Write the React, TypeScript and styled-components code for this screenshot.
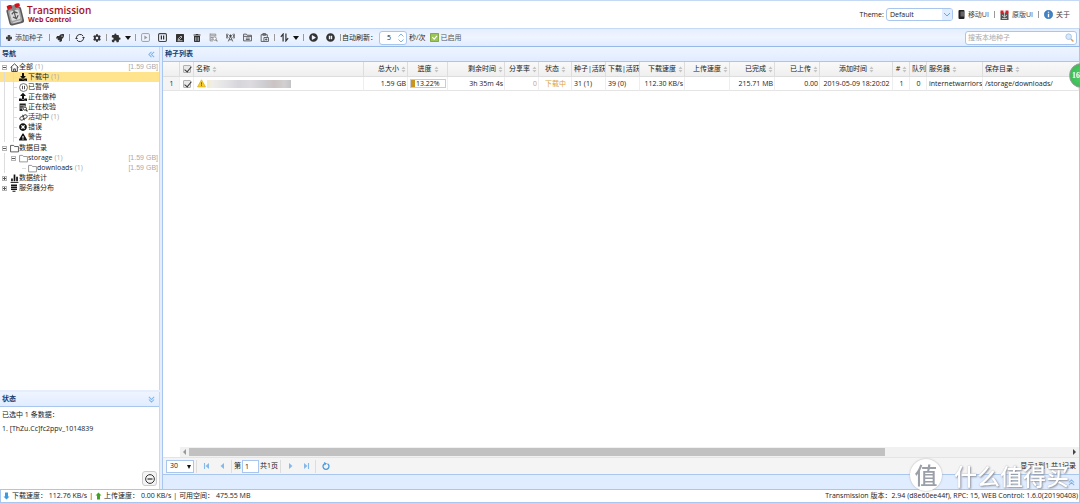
import React from 'react';
import styled, { createGlobalStyle, css } from 'styled-components';
import {
  FaRocket, FaCog, FaDownload, FaUpload, FaTimesCircle,
  FaExclamationTriangle, FaTrashAlt, FaPlayCircle, FaPauseCircle,
} from 'react-icons/fa';
import { MdExtension } from 'react-icons/md';

const line = '#95b8e7';
const ui = `"Open Sans", "Noto Sans CJK SC", sans-serif`;

const Global = createGlobalStyle`
  * { box-sizing: border-box; }
  body { margin: 0; overflow: hidden; background: #fff; }
  body, button, input, select { font-family: ${ui}; font-size: 7px; line-height: 10px; color: #222; }
  svg { display: block; flex: none; }
`;

const Page = styled.div`
  height: 100vh;
  display: flex;
  flex-direction: column;
  background: #e6eefb;
  overflow: hidden;
`;
const Header = styled.header`
  height: 28px;
  display: flex;
  align-items: center;
  justify-content: space-between;
  padding: 0 9px 0 4px;
  background: #fff;
  border: 1px solid #c5d9f5;
  border-bottom: 0;
`;
const Brand = styled.div`
  display: flex;
  align-items: center;
  gap: 2px;
  color: #a80f1c;
`;
const Title = styled.div`
  font-size: 10px;
  line-height: 11px;
  font-weight: 600;
`;
const Subtitle = styled.div`
  font-size: 7px;
  line-height: 8px;
  font-weight: 700;
  padding-left: 1px;
`;
const HeaderTools = styled.div`
  display: flex;
  align-items: center;
  gap: 5px;
`;
const ThemeLabel = styled.label`
  display: flex;
  align-items: center;
  gap: 2px;
`;
const SelectWrap = styled.span<{ $w: number }>`
  position: relative;
  display: block;
  width: ${p => p.$w}px;
  svg { position: absolute; right: 0; top: 0; pointer-events: none; }
`;
const Select = styled.select<{ $round?: boolean }>`
  appearance: none;
  display: block;
  width: 100%;
  height: 13px;
  padding: 0 3px;
  background: #fff;
  border: 1px solid #a9c6ee;
  border-radius: ${p => (p.$round ? 3 : 0)}px;
`;
const Link = styled.a`
  display: flex;
  align-items: center;
  gap: 3px;
  color: #444;
  text-decoration: none;
`;
const Divider = styled.span`
  width: 1px;
  height: 7px;
  background: #999;
`;
const Toolbar = styled.div`
  height: 19px;
  display: flex;
  align-items: center;
  padding: 0 2px 0 4px;
  border: 1px solid ${line};
  border-top-color: #c5d9f5;
  background: linear-gradient(#e5eefd, #eff5ff 50%, #e0ecff);
  ${Divider} { margin: 0 1px; }
`;
const plainButton = css`
  border: 0;
  padding: 0;
  background: none;
  display: flex;
  align-items: center;
  color: #333;
`;
const AddButton = styled.button`
  ${plainButton}
  gap: 2px;
  padding-right: 5px;
  color: #444;
`;
const ToolButton = styled.button<{ $menu?: boolean }>`
  ${plainButton}
  width: ${p => (p.$menu ? 26 : 17)}px;
  height: 15px;
  justify-content: center;
  gap: 4px;
`;
const Spinner = styled.span`
  display: flex;
  align-items: center;
  width: 28px;
  height: 14px;
  margin: 0 2px;
  padding-right: 2px;
  background: #fff;
  border: 1px solid #a9c6ee;
  border-radius: 3px;
`;
const SpinInput = styled.input`
  flex: 1;
  min-width: 0;
  border: 0;
  padding: 0;
  background: none;
  text-align: center;
  outline: 0;
`;
const Enabled = styled.button`
  ${plainButton}
  gap: 2px;
  margin-left: 4px;
  color: #555;
`;
const Search = styled.label`
  display: flex;
  align-items: center;
  width: 112px;
  height: 14px;
  margin-left: auto;
  padding: 0 2px;
  background: #fff;
  border: 1px solid #a9c6ee;
  border-radius: 3px;
`;
const SearchInput = styled.input`
  flex: 1;
  min-width: 0;
  border: 0;
  padding: 0;
  outline: 0;
  &::placeholder { color: #aaa; }
`;
const Body = styled.div`
  flex: 1;
  min-height: 0;
  display: flex;
  gap: 2px;
`;
const Sidebar = styled.aside`
  width: 160px;
  display: flex;
  flex-direction: column;
  gap: 2px;
`;
const Panel = styled.section<{ $grow?: boolean }>`
  ${p => (p.$grow ? 'flex: 1; min-height: 0;' : 'height: 97px;')}
  min-width: 0;
  display: flex;
  flex-direction: column;
  background: #fff;
  border-right: 1px solid #c5d9f5;
`;
const PanelHead = styled.h2`
  flex: none;
  height: 15px;
  margin: 0;
  padding: 0 4px 0 2px;
  display: flex;
  align-items: center;
  justify-content: space-between;
  font-size: 7px;
  font-weight: 700;
  color: #1c3a6e;
  border-bottom: 1px solid #a9c6ee;
  background: linear-gradient(#eff5ff, #e0ecff);
`;
const Tree = styled.ul`
  list-style: none;
  margin: 0;
  padding: 0;
`;
const Group = styled.li`
  padding-bottom: 1px;
`;
const Node = styled.div<{ $on?: boolean }>`
  height: 10px;
  display: flex;
  align-items: center;
  padding-right: 1px;
  background: ${p => (p.$on ? '#ffe48d' : 'transparent')};
`;
const Guide = styled.span<{ $tick?: boolean; $bar?: boolean }>`
  align-self: stretch;
  width: 9px;
  background:
    linear-gradient(#ddd, #ddd) 4px 0 / 1px ${p => (p.$bar ? '100%' : '0')} no-repeat,
    linear-gradient(#ddd, #ddd) 4px 5px / ${p => (p.$tick ? '4px 1px' : '0 0')} no-repeat;
`;
const Toggle = styled.span`
  width: 9px;
  padding-left: 2px;
`;
const IconCell = styled.span`
  width: 10px;
  display: flex;
  justify-content: center;
  color: #111;
`;
const Count = styled.span`
  color: #aaa;
  padding-left: 2px;
`;
const Size = styled.span`
  margin-left: auto;
  color: #aaa;
  font-family: "Liberation Sans", sans-serif;
`;
const StatusBody = styled.div`
  flex: 1;
  padding: 3px 2px;
  display: flex;
  flex-direction: column;
  gap: 4px;
`;
const HideButton = styled.button`
  ${plainButton}
  justify-content: center;
  width: 15px;
  height: 15px;
  margin: auto 0 0 auto;
  border: 1px solid #ccc;
  border-radius: 3px;
  background: #f4f4f4;
`;
const Main = styled.main`
  flex: 1;
  min-width: 0;
  display: flex;
  flex-direction: column;
  background: #fff;
  border: 1px solid #a9c6ee;
  border-width: 0 1px;
`;
const GridArea = styled.div`
  flex: 1;
  min-height: 0;
  overflow: hidden;
`;
const Table = styled.table`
  width: 100%;
  table-layout: fixed;
  border-collapse: separate;
  border-spacing: 0;
`;
const cell = css<{ $a?: string }>`
  padding: 0 1px 0 2px;
  overflow: hidden;
  white-space: nowrap;
  text-align: ${p => p.$a || 'left'};
`;
const Th = styled.th<{ $a?: string }>`
  ${cell}
  height: 15px;
  font-weight: 400;
  border-right: 1px solid #ddd;
  border-bottom: 1px solid #ddd;
  background: linear-gradient(#f9f9f9, #efefef);
  &:last-child { border-right-color: transparent; }
`;
const Td = styled.td<{ $a?: string; $c?: string; $gutter?: boolean }>`
  ${cell}
  height: 14px;
  color: ${p => p.$c || '#222'};
  background: ${p => (p.$gutter ? '#f4f4f4' : '#fff')};
  border-right: 1px solid #eee;
  border-bottom: 1px solid #e4e4e4;
`;
const HeadCell = styled.span`
  display: inline-flex;
  align-items: center;
  gap: 2px;
  vertical-align: middle;
`;
const Check = styled.input`
  appearance: none;
  display: block;
  position: relative;
  width: 8px;
  height: 8px;
  margin: 0 auto;
  border: 1px solid #b0b0b0;
  border-radius: 1px;
  background: #e8e8e8;
  &:checked::after {
    content: '';
    position: absolute;
    left: 2px;
    top: -1px;
    width: 3px;
    height: 6px;
    border: solid #333;
    border-width: 0 1px 1px 0;
    transform: rotate(40deg);
  }
`;
const NameCell = styled.div`
  display: flex;
  align-items: center;
  gap: 1px;
  padding-left: 1px;
`;
const Mosaic = styled.span`
  width: 84px;
  height: 8px;
  background: linear-gradient(90deg, #f4ebc4, #efeeea 6%, #e4e4e7 22%, #d6d6da 38%, #dedbe0 52%, #cfcfd4 66%, #cbc3c3 80%, #d2d0d1 92%, #c3c3c7);
`;
const Bar = styled.div`
  display: flex;
  align-items: center;
  height: 9px;
  border: 1px solid #ccc;
  background: linear-gradient(90deg, #c8961e 13%, #fff 13%);
  padding-left: 5px;
`;
const ScrollRow = styled.div`
  height: 10px;
  margin-left: 17px;
  display: flex;
  align-items: center;
  justify-content: space-between;
  gap: 3px;
  padding: 0 2px;
  background: #f1f1f1;
`;
const Track = styled.div`
  flex: 1;
  height: 8px;
  background: linear-gradient(#c1c1c1, #c1c1c1) 0 0 / 79% 100% no-repeat;
`;
const Pager = styled.div`
  height: 17px;
  display: flex;
  align-items: center;
  padding: 0 3px;
  background: #f4f4f4;
  border-top: 1px solid #e4e4e4;
`;
const PagerButton = styled.button`
  ${plainButton}
  width: 15px;
  height: 12px;
  justify-content: center;
`;
const PagerSep = styled.span`
  width: 1px;
  height: 13px;
  margin: 0 2px;
  background: #ddd;
`;
const PageInput = styled.input`
  width: 17px;
  height: 13px;
  margin: 0 1px;
  padding: 0 2px;
  border: 1px solid #a9c6ee;
  background: #fff;
`;
const PagerInfo = styled.span`
  margin-left: auto;
`;
const DetailBar = styled.div`
  height: 15px;
  display: flex;
  align-items: center;
  justify-content: flex-end;
  padding: 0 4px;
  border-top: 1px solid #a9c6ee;
  background: #e0ecff;
`;
const Footer = styled.footer`
  height: 14px;
  display: flex;
  align-items: center;
  gap: 2px;
  padding: 0 1px 0 2px;
  background: #fff;
  border: 1px solid #a9c6ee;
`;
const Version = styled.span`
  margin-left: auto;
`;
const SpeedBadge = styled.div`
  position: fixed;
  right: -14px;
  top: 63px;
  width: 25px;
  height: 25px;
  padding-left: 2px;
  border-radius: 50%;
  border: 1px solid #9a9a9a;
  background: radial-gradient(circle, #4fd068, #35b750);
  color: #fff;
  font: 700 8px/23px "Liberation Serif", serif;
`;
const Watermark = styled.div`
  position: fixed;
  right: 11px;
  bottom: 12px;
  display: flex;
  align-items: center;
  gap: 12px;
  color: #fff;
  font: 500 23px/32px "Noto Sans CJK SC", sans-serif;
  text-shadow: 1px 1px 2px #8a8f99, 0 0 1px #a0a5ae;
`;
const Seal = styled.span`
  width: 32px;
  height: 32px;
  border-radius: 50%;
  background: #fff;
  box-shadow: 0 0 2px #aaa;
  color: #9b9fa8;
  text-align: center;
  line-height: 30px;
  text-shadow: none;
`;

const Svg = ({ w = 8, h = w, vb = '0 0 16 16', children }: {
  w?: number; h?: number; vb?: string; children: React.ReactNode;
}) => (
  <svg width={w} height={h} viewBox={vb} fill="none" stroke="currentColor" strokeWidth="1.6" aria-hidden="true">
    {children}
  </svg>
);

const Logo = () => (
  <Svg w={20} h={24} vb="0 0 40 48">
    <g transform="rotate(-14 20 24)" stroke="none">
      <rect x="5" y="9" width="30" height="34" rx="5" fill="#5a5a5a" />
      <rect x="8" y="11" width="24" height="29" rx="4" fill="#a2a2a2" />
      <rect x="11" y="15" width="18" height="19" rx="2" fill="#dcdcdc" />
      <path d="M20 14v17M14 21l6-4 6 4M15 27l6 5 5-6" stroke="#555" strokeWidth="2.4" fill="none" />
      <path d="M13 38h15" stroke="#ddd" strokeWidth="2" />
      <path d="M17 4h8v10h-8z" fill="#888" />
      <path d="M8 3c4-2 8-1 10 0v6c-3 1-7 1-10-1zM24 3c4-1 8-1 10 1v5c-3 1-7 1-10 0z" fill="#d5101c" />
    </g>
  </Svg>
);
const Caret = () => <Svg w={6} h={4} vb="0 0 6 4"><path d="M0 0h6L3 4z" fill="#111" stroke="none" /></Svg>;
const Sort = () => (
  <Svg w={5} h={7} vb="0 0 10 14"><path d="M1 6l4-5 4 5zM1 8h8l-4 5z" fill="#c4c4c4" stroke="none" /></Svg>
);
const Plus = () => <Svg w={8}><path d="M8 2v12M2 8h12" strokeWidth="5" /></Svg>;
const Refresh = () => (
  <Svg w={10}><path d="M2.200 7.500a6 6 0 0 1 11-2.500M13.800 8.500a6 6 0 0 1-11 2.500" /><path d="M15.800 6.500h-4.600l2.600 3zM.2 9.500h4.600l-2.600-3z" fill="currentColor" stroke="none" /></Svg>
);
const BoxPlay = () => <Svg w={9}><rect x="1" y="1" width="14" height="14" rx="2" stroke="#999" /><path d="M6 4.500v7L11.500 8z" fill="#999" stroke="none" /></Svg>;
const BoxPause = () => <Svg w={9}><rect x="1" y="1" width="14" height="14" rx="2" stroke="#444" strokeWidth="2" /><path d="M6 4.500v7M10 4.500v7" strokeWidth="2.200" /></Svg>;
const Edit = () => <Svg w={8}><rect width="16" height="16" rx="1" fill="#333" stroke="none" /><path d="M4.500 9.500L10 4l2 2-5.500 5.500h-2zM3 13.500h10" stroke="#fff" strokeWidth="1.300" /></Svg>;
const ListSearch = () => (
  <Svg w={9}><g stroke="#888"><path d="M2 2h10v4M2 1v13h5M3 5h8M3 8h4M3 11h4" /><circle cx="10" cy="10" r="3" fill="#fff" /><path d="M12 12l3 3" strokeWidth="2" /></g></Svg>
);
const Verify = () => (
  <Svg w={9}><path d="M1 1h11v5a5 5 0 0 0-5 8H1z" fill="#222" stroke="none" /><path d="M2 5h9M2 9h5" stroke="#fff" strokeWidth="1.200" /><circle cx="10.500" cy="10" r="2.800" stroke="#222" /><path d="M12.500 12l2.500 3" stroke="#222" strokeWidth="2" /></Svg>
);
const Tower = () => (
  <Svg w={9}><path d="M8 6L4 15M8 6l4 9M5.500 12h5M4 2a5 5 0 0 0 0 7M12 2a5 5 0 0 1 0 7M2 1a7 7 0 0 0 0 9M14 1a7 7 0 0 1 0 9" stroke="#555" /><circle cx="8" cy="5" r="1.500" fill="#555" /></Svg>
);
const FolderLines = () => <Svg w={9}><path d="M1 14V2h5l1.500 2H15v10zM1 6h14M5 9h7M5 11.500h7" stroke="#555" /></Svg>;
const Paste = () => <Svg w={9}><path d="M7 15H2V3h11v4M5 3V1h5v3H5z" stroke="#555" /><path d="M7 8h8v7H7zM9 11.500h4M11 9.500v4" stroke="#555" /></Svg>;
const SortBars = () => <Svg w={9}><path d="M5.500 15V2L1.500 7M10.500 1v13l4-5" strokeWidth="2.200" /></Svg>;
const Home = () => <Svg w={9}><path d="M1 8l7-6.500L15 8M3 7v8h10V7M6.500 15v-4.500h3V15" stroke="#333" /></Svg>;
const PauseRing = () => <Svg w={9}><circle cx="8" cy="8" r="7" stroke="#444" strokeWidth="1.300" /><path d="M6.200 5v6M9.800 5v6" stroke="#444" /></Svg>;
const Active = () => (
  <Svg w={9}><g transform="rotate(-20 8 8)"><path d="M7 11.500H4a3 3 0 0 1 0-6h5M7 3l2.500 2.500L7 8M9 4.500h3a3 3 0 0 1 0 6H7M9 13l-2.500-2.500L9 8" stroke="#333" strokeWidth="1.400" /></g></Svg>
);
const Folder = ({ light }: { light?: boolean }) => <Svg w={9}><path d="M1 14V2.500h5.500L8 4.500h7V14z" stroke={light ? '#888' : '#444'} strokeWidth="1.500" /></Svg>;
const Chart = () => <Svg w={9}><path d="M3.500 13V8M8 13V1M12.500 13V5" strokeWidth="3" /><path d="M1 15h14" /></Svg>;
const Servers = () => <Svg w={8}><path d="M2 2.500h12M2 6.500h12M2 10.500h12" strokeWidth="3.200" /><path d="M5 14.500h6" strokeWidth="2" /></Svg>;
const Box = ({ open }: { open?: boolean }) => (
  <Svg w={5} vb="0 0 5 5"><rect x=".5" y=".5" width="4" height="4" stroke="#b5b5b5" strokeWidth="1" /><path d={open ? 'M1 2.500h3' : 'M1 2.500h3M2.500 1v3'} stroke="#555" strokeWidth="1" /></Svg>
);
const Chevrons = ({ turn = 0 }: { turn?: number }) => (
  <Svg w={7}><g transform={`rotate(${turn} 8 8)`}><path d="M8 2L2 8l6 6M14 2L8 8l6 6" stroke="#7fb4ea" strokeWidth="2.400" /></g></Svg>
);
const PageArrow = ({ flip, end }: { flip?: boolean; end?: boolean }) => (
  <Svg w={8}><g transform={flip ? 'rotate(180 8 8)' : undefined}><path d="M12 2v12L5 8z" fill="#85b9ea" stroke="none" />{end && <path d="M3 2v12" stroke="#85b9ea" strokeWidth="2.200" />}</g></Svg>
);
const Arrow = ({ up }: { up?: boolean }) => (
  <Svg w={7} h={8} vb="0 0 14 16"><path d={up ? 'M7 1l6 6h-3v8H4V7H1z' : 'M7 15l6-6h-3V1H4v8H1z'} fill={up ? '#3fa51c' : '#3b9be0'} stroke="none" /></Svg>
);

type TreeItem = { icon: React.ReactNode; text: string; count?: number; on?: boolean };
const states: TreeItem[] = [
  { icon: <FaDownload size={8} />, text: '下载中', count: 1, on: true },
  { icon: <PauseRing />, text: '已暂停' },
  { icon: <FaUpload size={8} />, text: '正在做种' },
  { icon: <Verify />, text: '正在校验' },
  { icon: <Active />, text: '活动中', count: 1 },
  { icon: <FaTimesCircle size={8} />, text: '错误' },
  { icon: <FaExclamationTriangle size={8} />, text: '警告' },
];

type Column = { head: React.ReactNode; w?: number; a?: string; ha?: string; sort?: boolean; value: React.ReactNode; c?: string };
const columns: Column[] = [
  { head: '', w: 17, a: 'center', value: '1' },
  { head: <Check type="checkbox" defaultChecked aria-label="全选" />, w: 14, value: <Check type="checkbox" defaultChecked aria-label="选择" /> },
  {
    head: '名称', w: 170, sort: true,
    value: (
      <NameCell>
        <Svg w={9}><path d="M8 1.500L15 14H1z" fill="#f7cf2b" stroke="#e0b52a" /><path d="M8 6v4M8 11v1.500" stroke="#6a5400" /></Svg>
        <Mosaic />
      </NameCell>
    ),
  },
  { head: '总大小', w: 44, a: 'right', sort: true, value: '1.59 GB' },
  { head: '进度', w: 40, a: 'left', ha: 'center', sort: true, value: <Bar>13.22%</Bar> },
  { head: '剩余时间', w: 57, a: 'right', sort: true, value: '3h 35m 4s' },
  { head: '分享率', w: 34, a: 'right', sort: true, value: '0', c: '#d9a441' },
  { head: '状态', w: 33, a: 'center', sort: true, value: '下载中', c: '#d9a441' },
  { head: '种子|活跃', w: 34, value: '31 (1)' },
  { head: '下载|活跃', w: 34, value: '39 (0)' },
  { head: '下载速度', w: 45, a: 'right', sort: true, value: '112.30 KB/s' },
  { head: '上传速度', w: 45, a: 'right', sort: true, value: '' },
  { head: '已完成', w: 45, a: 'right', sort: true, value: '215.71 MB' },
  { head: '已上传', w: 45, a: 'right', sort: true, value: '0.00' },
  { head: '添加时间', w: 73, a: 'center', sort: true, value: '2019-05-09 18:20:02' },
  { head: '#', w: 17, a: 'center', sort: true, value: '1' },
  { head: '队列', w: 17, a: 'center', value: '0' },
  { head: '服务器', w: 56, sort: true, value: 'internetwarriors.' },
  { head: '保存目录', sort: true, value: '/storage/downloads/' },
];

export default function App() {
  return (
    <Page>
      <Global />
      <Header>
        <Brand>
          <Logo />
          <div>
            <Title>Transmission</Title>
            <Subtitle>Web Control</Subtitle>
          </div>
        </Brand>
        <HeaderTools>
          <ThemeLabel>
            Theme:
            <SelectWrap $w={67}>
              <Select $round defaultValue="Default"><option>Default</option></Select>
              <svg width="11" height="13" viewBox="0 0 11 13">
                <path d="M0 1h8a2 2 0 0 1 2 2v7a2 2 0 0 1-2 2H0z" fill="#e0ecff" />
                <path d="M2 5l3 3 3-3" fill="none" stroke="#6ea5e0" />
              </svg>
            </SelectWrap>
          </ThemeLabel>
          <Link href="#mobile">
            <Svg w={7} h={9} vb="0 0 14 18"><rect x="1" width="12" height="18" rx="2" fill="#222" stroke="none" /><path d="M5 3h7v10H5z" fill="#666" stroke="none" /></Svg>
            移动UI
          </Link>
          <Divider />
          <Link href="#classic">
            <Svg w={9} h={10} vb="0 0 18 20"><rect x="1" y="5" width="16" height="15" fill="#555" stroke="none" /><path d="M1 1h6v5H1zM11 1h6v5h-6z" fill="#d5202a" stroke="none" /><path d="M9 1v13M4 10l5 4 5-4M4 17h10" stroke="#ddd" /></Svg>
            原版UI
          </Link>
          <Divider />
          <Link href="#about">
            <Svg w={9}><circle cx="8" cy="8" r="7.500" fill="#3f83c9" stroke="#2f6cab" strokeWidth="1" /><path d="M8 3v2M8 6.500V13" stroke="#fff" strokeWidth="2.400" /></Svg>
            关于
          </Link>
        </HeaderTools>
      </Header>

      <Toolbar>
        <AddButton><Plus />添加种子</AddButton>
        <Divider />
        <ToolButton aria-label="添加"><FaRocket size={8} /></ToolButton>
        <Divider />
        <ToolButton aria-label="刷新"><Refresh /></ToolButton>
        <ToolButton aria-label="设置"><FaCog size={8} /></ToolButton>
        <Divider />
        <ToolButton $menu aria-label="插件"><MdExtension size={10} /><Caret /></ToolButton>
        <Divider />
        <ToolButton aria-label="开始"><BoxPlay /></ToolButton>
        <ToolButton aria-label="暂停"><BoxPause /></ToolButton>
        <ToolButton aria-label="改名"><Edit /></ToolButton>
        <ToolButton aria-label="删除"><FaTrashAlt size={8} /></ToolButton>
        <ToolButton aria-label="校验"><ListSearch /></ToolButton>
        <ToolButton aria-label="汇报"><Tower /></ToolButton>
        <ToolButton aria-label="目录"><FolderLines /></ToolButton>
        <ToolButton aria-label="复制"><Paste /></ToolButton>
        <Divider />
        <ToolButton $menu aria-label="队列"><SortBars /><Caret /></ToolButton>
        <Divider />
        <ToolButton aria-label="全部开始"><FaPlayCircle size={9} /></ToolButton>
        <ToolButton aria-label="全部暂停"><FaPauseCircle size={9} /></ToolButton>
        <Divider />
        <label htmlFor="interval">自动刷新：</label>
        <Spinner>
          <SpinInput id="interval" defaultValue="5" />
          <Svg w={6} h={10} vb="0 0 6 10"><path d="M.5 3.500L3 1l2.500 2.500M.5 6.500L3 9l2.500-2.500" stroke="#7fb4ea" strokeWidth="1" /></Svg>
        </Spinner>
        <span>秒/次</span>
        <Enabled>
          <Svg w={9}><rect x="1" y="1" width="14" height="14" fill="#9cc656" stroke="#7ba43a" /><path d="M4 7.500l3.500 3.500L12.500 5" stroke="#fff" strokeWidth="2" /></Svg>
          已启用
        </Enabled>
        <Search>
          <SearchInput placeholder="搜索本地种子" aria-label="搜索本地种子" />
          <Svg w={9}><circle cx="6.500" cy="6.500" r="5" fill="#d6e8fa" stroke="#a9c4e0" /><path d="M10.500 10.500L15 15" stroke="#d9a066" strokeWidth="2.600" /></Svg>
        </Search>
      </Toolbar>

      <Body>
        <Sidebar>
          <Panel $grow>
            <PanelHead>导航<Chevrons /></PanelHead>
            <Tree>
              <Group>
                <Node>
                  <Toggle><Box open /></Toggle><IconCell><Home /></IconCell>全部<Count>(1)</Count><Size>[1.59 GB]</Size>
                </Node>
                <Tree>
                  {states.map(s => (
                    <li key={s.text}>
                      <Node $on={s.on}>
                        <Guide $bar /><Guide $bar $tick />
                        <IconCell>{s.icon}</IconCell>{s.text}
                        {s.count && <Count>({s.count})</Count>}
                      </Node>
                    </li>
                  ))}
                </Tree>
              </Group>
              <li>
                <Node><Toggle><Box open /></Toggle><IconCell><Folder /></IconCell>数据目录</Node>
                <Tree>
                  <li>
                    <Node><Guide $bar /><Toggle><Box open /></Toggle><IconCell><Folder light /></IconCell>storage<Count>(1)</Count><Size>[1.59 GB]</Size></Node>
                  </li>
                  <li>
                    <Node><Guide $bar /><Guide /><Guide $tick /><IconCell><Folder light /></IconCell>downloads<Count>(1)</Count><Size>[1.59 GB]</Size></Node>
                  </li>
                </Tree>
              </li>
              <li><Node><Toggle><Box /></Toggle><IconCell><Chart /></IconCell>数据统计</Node></li>
              <li><Node><Toggle><Box /></Toggle><IconCell><Servers /></IconCell>服务器分布</Node></li>
            </Tree>
          </Panel>
          <Panel>
            <PanelHead>状态<Chevrons turn={-90} /></PanelHead>
            <StatusBody>
              <div>已选中 1 条数据：</div>
              <div>1. [ThZu.Cc]fc2ppv_1014839</div>
              <HideButton aria-label="隐藏">
                <Svg w={10}><circle cx="8" cy="8" r="7" /><path d="M4 8h8" strokeWidth="2" /></Svg>
              </HideButton>
            </StatusBody>
          </Panel>
        </Sidebar>

        <Main>
          <PanelHead>种子列表</PanelHead>
          <GridArea>
            <Table>
              <colgroup>{columns.map((c, i) => <col key={i} width={c.w} />)}</colgroup>
              <thead>
                <tr>
                  {columns.map((c, i) => (
                    <Th key={i} $a={c.ha || c.a}>
                      {c.sort ? <HeadCell>{c.head}<Sort /></HeadCell> : c.head}
                    </Th>
                  ))}
                </tr>
              </thead>
              <tbody>
                <tr>
                  {columns.map((c, i) => <Td key={i} $a={c.a} $c={c.c} $gutter={i === 0}>{c.value}</Td>)}
                </tr>
              </tbody>
            </Table>
          </GridArea>
          <ScrollRow>
            <Svg w={4} h={6} vb="0 0 4 6"><path d="M4 0v6L1 3z" fill="#999" stroke="none" /></Svg>
            <Track />
            <Svg w={4} h={6} vb="0 0 4 6"><path d="M0 0v6l3-3z" fill="#444" stroke="none" /></Svg>
          </ScrollRow>
          <Pager>
            <SelectWrap $w={28}>
              <Select defaultValue="30" aria-label="每页"><option>30</option></Select>
              <svg width="9" height="13" viewBox="0 0 9 13"><path d="M2 5h4L4 9z" fill="#111" /></svg>
            </SelectWrap>
            <PagerSep />
            <PagerButton aria-label="首页"><PageArrow end /></PagerButton>
            <PagerButton aria-label="上一页"><PageArrow /></PagerButton>
            <PagerSep />
            <label htmlFor="page">第</label>
            <PageInput id="page" defaultValue="1" />
            <span>共1页</span>
            <PagerSep />
            <PagerButton aria-label="下一页"><PageArrow flip /></PagerButton>
            <PagerButton aria-label="末页"><PageArrow flip end /></PagerButton>
            <PagerSep />
            <PagerButton aria-label="刷新"><Svg w={8}><path d="M5 3.500A6 6 0 1 0 11 3.500" stroke="#4a9ade" strokeWidth="2.600" /><path d="M4 0l6 3-5 4z" fill="#4a9ade" stroke="none" /></Svg></PagerButton>
            <PagerInfo>显示1到1,共1记录</PagerInfo>
          </Pager>
          <DetailBar><Chevrons turn={90} /></DetailBar>
        </Main>
      </Body>

      <Footer>
        <Arrow /><span>下载速度： 112.76 KB/s</span><span>|</span>
        <Arrow up /><span>上传速度： 0.00 KB/s</span><span>|</span>
        <span>可用空间： 475.55 MB</span>
        <Version>Transmission 版本：2.94 (d8e60ee44f), RPC: 15, WEB Control: 1.6.0(20190408)</Version>
      </Footer>

      <SpeedBadge>16</SpeedBadge>
      <Watermark><Seal>值</Seal>什么值得买</Watermark>
    </Page>
  );
}
